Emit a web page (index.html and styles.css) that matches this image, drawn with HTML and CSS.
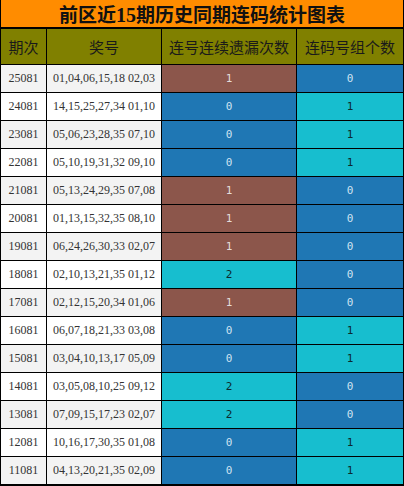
FILE: index.html
```html
<!DOCTYPE html>
<html lang="zh">
<head>
<meta charset="utf-8">
<link rel="stylesheet" href="styles.css">
</head>
<body>
<div class="frame">
  <div class="title">前区近<span class="num">15</span>期历史同期连码统计图表</div>
  <div class="grid">
    <div class="hd">期次</div><div class="hd">奖号</div><div class="hd">连号连续遗漏次数</div><div class="hd">连码号组个数</div>

    <div class="c odd">25081</div><div class="c odd">01,04,06,15,18 02,03</div><div class="v br">1</div><div class="v bl">0</div>
    <div class="c">24081</div><div class="c">14,15,25,27,34 01,10</div><div class="v bl">0</div><div class="v cy">1</div>
    <div class="c odd">23081</div><div class="c odd">05,06,23,28,35 07,10</div><div class="v bl">0</div><div class="v cy">1</div>
    <div class="c">22081</div><div class="c">05,10,19,31,32 09,10</div><div class="v bl">0</div><div class="v cy">1</div>
    <div class="c odd">21081</div><div class="c odd">05,13,24,29,35 07,08</div><div class="v br">1</div><div class="v bl">0</div>
    <div class="c">20081</div><div class="c">01,13,15,32,35 08,10</div><div class="v br">1</div><div class="v bl">0</div>
    <div class="c odd">19081</div><div class="c odd">06,24,26,30,33 02,07</div><div class="v br">1</div><div class="v bl">0</div>
    <div class="c">18081</div><div class="c">02,10,13,21,35 01,12</div><div class="v cy">2</div><div class="v bl">0</div>
    <div class="c odd">17081</div><div class="c odd">02,12,15,20,34 01,06</div><div class="v br">1</div><div class="v bl">0</div>
    <div class="c">16081</div><div class="c">06,07,18,21,33 03,08</div><div class="v bl">0</div><div class="v cy">1</div>
    <div class="c odd">15081</div><div class="c odd">03,04,10,13,17 05,09</div><div class="v bl">0</div><div class="v cy">1</div>
    <div class="c">14081</div><div class="c">03,05,08,10,25 09,12</div><div class="v cy">2</div><div class="v bl">0</div>
    <div class="c odd">13081</div><div class="c odd">07,09,15,17,23 02,07</div><div class="v cy">2</div><div class="v bl">0</div>
    <div class="c">12081</div><div class="c">10,16,17,30,35 01,08</div><div class="v bl">0</div><div class="v cy">1</div>
    <div class="c odd">11081</div><div class="c odd">04,13,20,21,35 02,09</div><div class="v bl">0</div><div class="v cy">1</div>
  </div>
</div>
</body>
</html>
```
FILE: styles.css
```css
html, body {
  margin: 0;
  padding: 0;
  background: #ffffff;
}
.frame {
  width: 404px;
  height: 486px;
  box-sizing: border-box;
  background: #000;
  padding: 0 1px 2px 1px;
  display: flex;
  flex-direction: column;
}
.title {
  height: 27px;
  margin-bottom: 2px;
  background: #ff8c00;
  color: #111;
  font-family: "Noto Sans CJK SC", sans-serif;
  font-weight: bold;
  font-size: 19px;
  line-height: 27px;
  text-align: center;
}
.title .num {
  font-family: "Liberation Serif", serif;
  font-size: 20px;
}
.grid {
  display: grid;
  grid-template-columns: 45px 114px 134px 106px;
  grid-template-rows: 35px repeat(15, 27px);
  gap: 1px;
}
.hd {
  background: #808000;
  color: #1a1a1a;
  font-family: "Noto Sans CJK SC", sans-serif;
  font-size: 15px;
  display: flex;
  align-items: center;
  justify-content: center;
}
.c {
  background: #ffffff;
  color: #333;
  font-family: "Liberation Serif", serif;
  font-size: 12px;
  display: flex;
  align-items: center;
  justify-content: center;
}
.c.odd {
  background: #f3f3f3;
}
.v {
  font-family: "DejaVu Sans Mono", monospace;
  font-size: 11px;
  display: flex;
  align-items: center;
  justify-content: center;
}
.br {
  background: #8c564b;
  color: #e4dcda;
}
.bl {
  background: #1f77b4;
  color: #cfe2f1;
}
.cy {
  background: #17becf;
  color: #0c2a2e;
}
```
